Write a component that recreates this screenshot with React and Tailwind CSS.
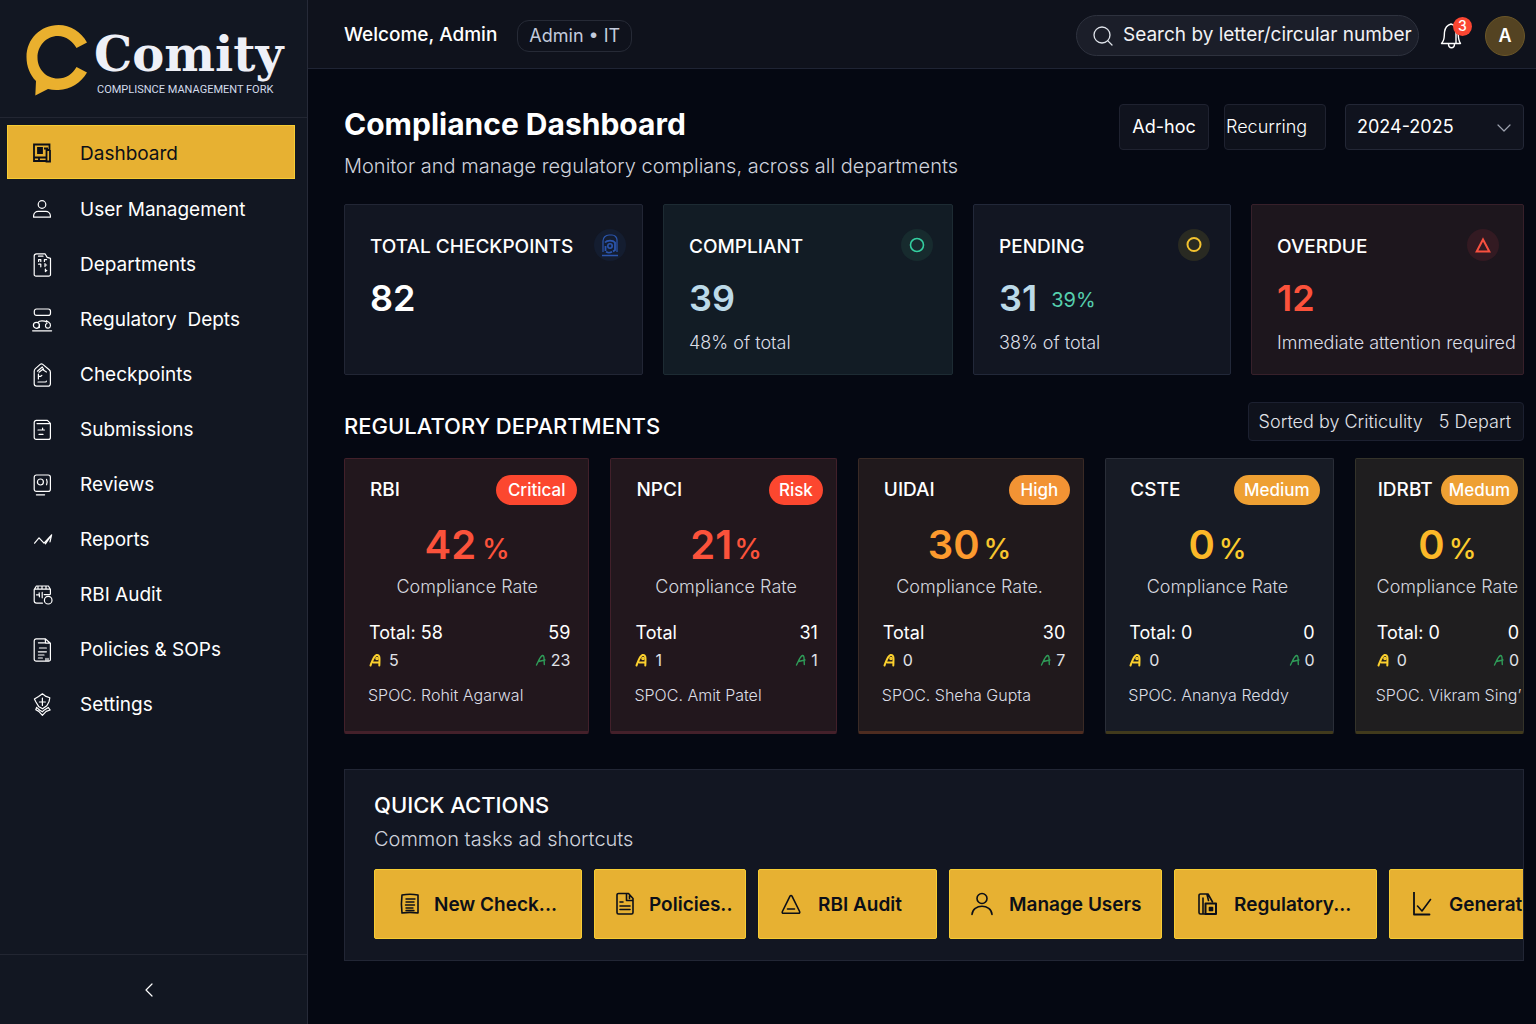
import {useState} from "react";
import {ChevronDown, ChevronLeft, Search} from "lucide-react";

const NavIcon = ({children}) => (
  <svg
    className="w-6 h-6 shrink-0"
    viewBox="0 0 24 24"
    fill="none"
    stroke="currentColor"
    strokeWidth="1.2"
    strokeLinecap="round"
    strokeLinejoin="round"
    aria-hidden="true"
  >
    {children}
  </svg>
);

const navItems = [
  {
    name: "User Management",
    icon: (
      <>
        <circle cx="12" cy="6.5" r="3.8" />
        <path d="M3.6 19.2v-1.4a4.6 4.6 0 0 1 4.6-4.4h7.6a4.6 4.6 0 0 1 4.6 4.4v1.4z" />
      </>
    ),
  },
  {
    name: "Departments",
    icon: (
      <>
        <path d="M6.5.8H15l2.2 3.6 3.3 1v16a1.8 1.8 0 0 1-1.8 1.8H6a1.8 1.8 0 0 1-1.8-1.8V3.1A2.3 2.3 0 0 1 6.5.8z" />
        <path d="M8.5 3.2h4.5M8.6 8.4V6.6h2.2v1.8M14.4 8.4V6.6h2.2M8.6 11.2h2.2v2.6M15 10.6v3M15 12h1.6M15.4 16v2.6l1.4-1.3" />
      </>
    ),
  },
  {
    name: "Regulatory  Depts",
    icon: (
      <>
        <rect x="4.3" y="1" width="16.2" height="6.4" rx="2.2" />
        <path d="M8 14.4c1-1.6 3.2-1.6 4-1.6s3 0 4.6 1.2M16.4 12.6l1.8 1.4" />
        <circle cx="6.4" cy="17.3" r="3" />
        <path d="M18.8 14.2c2.6 1.6 2 5.8-.6 6-3 .2-3.8-3.6-1.2-5M9.4 17v2.6M2.6 22.8h19" />
      </>
    ),
  },
  {
    name: "Checkpoints",
    icon: (
      <>
        <path d="M4.2 8.2c0-1.2.4-1.8 1.2-2.6l4.8-4.2c.8-.7 1.8-.7 2.6 0l6.4 5.4c.8.7 1.2 1.4 1.2 2.4v11.6a2.4 2.4 0 0 1-2.4 2.4H6.6a2.4 2.4 0 0 1-2.4-2.4z" />
        <path d="M7.4 8.2 12.2 4l1.4 2.2M9 9.2l3.6-2.6 3.8 2.4M8.4 11v5M8.4 13.4h2l1.4-1M8 19h7.4a1 1 0 0 0 1-1" />
      </>
    ),
  },
  {
    name: "Submissions",
    icon: (
      <>
        <path d="M6.4 2.4h11l3 3v14a2 2 0 0 1-2 2H6.2a2 2 0 0 1-2-2V4.6a2.2 2.2 0 0 1 2.2-2.2zM7 5.6h13" />
        <path d="M8 12h6.4M12.6 10v2M9 16.4h4" />
      </>
    ),
  },
  {
    name: "Reviews",
    icon: (
      <>
        <rect x="4.2" y="2" width="16.2" height="16.4" rx="2.2" />
        <circle cx="10.4" cy="9" r="3" />
        <path d="M16.6 6.4c.8 1.8.8 3.6 0 5.4M6.4 21.8h8.2" />
      </>
    ),
  },
  {
    name: "Reports",
    icon: (
      <path d="M4.6 15.2 9 9.8l5 5.4 7.6-8.4-1.6 7M17 13l-1.6 2.8 6.2-9" />
    ),
  },
  {
    name: "RBI Audit",
    icon: (
      <>
        <path d="M12.4 20.2H6.6a2.4 2.4 0 0 1-2.4-2.4V6.6L6.4 3h12l2 3.2v5M4.6 6.2h15.6M8 3.2v3M12 3.2v3M16 3.2v3M6.4 11.8h2.8v-2M12.2 9.4v5.4M14.2 11.6h5.4M9.4 11.8v2" />
        <circle cx="18.2" cy="17.2" r="3.8" />
      </>
    ),
  },
  {
    name: "Policies & SOPs",
    icon: (
      <>
        <path d="M6 .8h9.2l5.2 4.4v16.2a1.8 1.8 0 0 1-1.8 1.8H6.2a2 2 0 0 1-2-2V2.8A2 2 0 0 1 6 .8zM8.4 4.8h7M15.2 1l.4 4.2h4.6" />
        <path d="M9.4 10h7M8.4 13.8h8M8.4 17h5.6M8.4 20h4M16 20.4v2.2M18 20.4v2.2" />
      </>
    ),
  },
  {
    name: "Settings",
    icon: (
      <>
        <path d="M8.6 3.4 12.4.8l3.6 2.6 3.8 1.4-.8 4-2.2 4-4.2 3-4-2.4-2.8-4.6L4.4 6z" />
        <path d="M12.4 5v7.4M9.4 9h6M6.6 14.4l-.8 2.4 3 1.6 3.6 4 3.8-4 4-1.4-2-2.6-4.2 2.8-1.6 1.6-2.6-1.6-3.2-2.8" />
      </>
    ),
  },
];

const stats = [
  {
    title: "TOTAL CHECKPOINTS",
    value: "82",
    card: "bg-[#121622] border-[#222635]",
    head: "pr-4",
    valueColor: "text-white",
    badge: "bg-[#141d30] text-[#2b55ac]",
    icon: (
      <>
        <path d="M5 19V8a6 6 0 0 1 6-6h3a5 5 0 0 1 5 5v12" strokeWidth="1.2" />
        <path d="M7 9.5c2-2.5 8-2.5 10 0V17l-2 1.5M7.5 13v5" strokeWidth="1.8" />
        <circle cx="12" cy="13" r="2.2" />
        <path d="M4 22.5h16M8 18.8c2 1.2 4 1.2 6 0" strokeWidth="1.6" />
      </>
    ),
  },
  {
    title: "COMPLIANT",
    value: "39",
    note: "48% of total",
    card: "bg-[#121c25] border-[#1d2b33]",
    head: "pr-[19px]",
    valueColor: "text-[#bcdae8]",
    badge: "bg-[#172b2e] text-[#34cfa0]",
    icon: <circle cx="12" cy="12" r="6.5" />,
  },
  {
    title: "PENDING",
    value: "31",
    extra: "39%",
    note: "38% of total",
    card: "bg-[#121622] border-[#222839]",
    head: "pr-5",
    valueColor: "text-[#bcdae8]",
    badge: "bg-[#292a22] text-[#f3c32f]",
    icon: <circle cx="12" cy="11.5" r="6.5" strokeWidth="2" />,
  },
  {
    title: "OVERDUE",
    value: "12",
    note: "Immediate attention required",
    card: "bg-[#1d161d] border-[#37202a]",
    head: "pr-6",
    valueColor: "text-[#fb523b]",
    badge: "bg-[#331a22] text-[#f9503f]",
    icon: <path d="M12 6.5 18.3 18.5H5.7z" strokeWidth="2" />,
  },
];

const departments = [
  {
    name: "RBI",
    level: "Critical",
    badge: "bg-[#fc472f] px-3",
    rate: "42",
    rateColor: "text-[#fb523b]",
    percentColor: "text-[#fb523b] ml-1.5",
    label: "Compliance Rate",
    total: "Total: 58",
    count: "59",
    open: 5,
    done: 23,
    spoc: "SPOC. Rohit Agarwal",
    card: "bg-[#22171d] border-[#42202a] border-b-[#44202a] pl-[23px]",
    head: "pr-[11px]",
    center: "pr-[22px]",
    inset: "pr-[18px]",
  },
  {
    name: "NPCI",
    level: "Risk",
    badge: "bg-[#fc472f] px-2.5",
    rate: "21",
    rateColor: "text-[#fb523b]",
    percentColor: "text-[#fb523b] ml-0.5",
    label: "Compliance Rate",
    total: "Total",
    count: "31",
    open: 1,
    done: 1,
    spoc: "SPOC. Amit Patel",
    card: "bg-[#22171d] border-[#42202a] border-b-[#44202a] pl-[23px]",
    head: "pr-[13px]",
    center: "pr-[18px]",
    inset: "pr-[18px]",
  },
  {
    name: "UIDAI",
    level: "High",
    badge: "bg-[#f29334] px-3",
    rate: "30",
    rateColor: "text-[#fc9a2e]",
    percentColor: "text-[#f8c52e] ml-1",
    label: "Compliance Rate.",
    total: "Total",
    count: "30",
    open: 0,
    done: 7,
    spoc: "SPOC. Sheha Gupta",
    card: "bg-[#20191c] border-[#3a2a25] border-b-[#4e2c20] pl-[23px]",
    head: "pr-[13px]",
    center: "pr-[26px]",
    inset: "pr-[18px]",
  },
  {
    name: "CSTE",
    level: "Medium",
    badge: "bg-[#eea033] px-2.5",
    rate: "0",
    rateColor: "text-[#fbb828]",
    percentColor: "text-[#fbcb2d] ml-1",
    label: "Compliance Rate",
    total: "Total: 0",
    count: "0",
    open: 0,
    done: 0,
    spoc: "SPOC. Ananya Reddy",
    card: "bg-[#171b25] border-[#2a2e38] border-b-[#413a1c] pl-[22px]",
    head: "pr-[13px]",
    center: "pr-[26px]",
    inset: "pr-[18px]",
  },
  {
    name: "IDRBT",
    level: "Medum",
    badge: "bg-[#eea033] px-2",
    rate: "0",
    rateColor: "text-[#fbb828]",
    percentColor: "text-[#fbcb2d] ml-1",
    label: "Compliance Rate",
    total: "Total: 0",
    count: "0",
    open: 0,
    done: 0,
    spoc: "SPOC. Vikram Sing’",
    card: "bg-[#1f1e1f] border-[#34332a] border-b-[#413a1c] pl-5",
    head: "pr-[5px]",
    center: "pr-1",
    inset: "pr-1",
  },
];

const actions = [
  {
    name: "New Check...",
    size: "w-[208px] pl-[23px] gap-3",
    icon: (
      <>
        <path d="M4 3c5-1 11-1 16 0v18c-5-.8-11-.8-16 0-.8-6-.8-12 0-18z" />
        <path d="M8 7h9M8 10h8M7.5 13h9M8 16h7M8 18.5h8" strokeWidth="1.4" />
      </>
    ),
  },
  {
    name: "Policies..",
    size: "w-[152px] pl-[18px] gap-3",
    icon: (
      <>
        <path d="M5.5 1.5h10l4.5 5v14a1.5 1.5 0 0 1-1.5 1.5h-13A1.5 1.5 0 0 1 4 20.5V3a1.5 1.5 0 0 1 1.5-1.5zM13.5 1.5v7H20M16.5 3.5v3" />
        <path d="M7 10h3M7 14h10M7 17.5h10" />
      </>
    ),
  },
  {
    name: "RBI Audit",
    size: "w-[179px] pl-5 gap-[15px]",
    icon: (
      <>
        <path d="M11 4.2c.5-.9 1.5-.9 2 0l7.6 15.3c.5 1-.1 1.8-1 1.8H4.400c-1 0-1.500-.8-1-1.800z" />
        <path d="M8.5 17h7" />
      </>
    ),
  },
  {
    name: "Manage Users",
    size: "w-[213px] pl-5 gap-[15px]",
    icon: (
      <>
        <circle cx="12" cy="6.5" r="5" />
        <path d="M2 22.5c.5-11 19.5-11 20 0" />
      </>
    ),
  },
  {
    name: "Regulatory...",
    size: "w-[203px] pl-5 gap-[15px]",
    icon: (
      <>
        <path d="M11 22H5.5A1.5 1.5 0 0 1 4 20.5v-17A1.5 1.5 0 0 1 5.5 2H13l4.5 8M8 6v16M12 2.5l1.5 6" />
        <path d="M10.5 11.5H21V22H10.5z" strokeWidth="2" />
        <path d="M14.5 15.5h3v3h-3z" fill="currentColor" />
      </>
    ),
  },
  {
    name: "Generat",
    size: "w-[203px] pl-5 gap-[15px]",
    icon: (
      <>
        <path d="M4 0v22.5h15.5" strokeWidth="1.8" />
        <path d="m7.5 14 4.5 5L20.5 7.5" />
      </>
    ),
  },
];

const AlertMark = () => (
  <svg
    className="w-3 h-3.5 text-[#fbd02e]"
    viewBox="0 0 12 14"
    fill="none"
    stroke="currentColor"
    strokeWidth="2"
    strokeLinecap="round"
    aria-hidden="true"
  >
    <path d="M1.5 12.5C3 9 4.5 3 7.5 2c4-.8 3 5 2.8 10.5M4.5 9.5h5.5" />
    <circle cx="8" cy="5.5" r=".8" />
  </svg>
);

const DoneMark = () => (
  <svg
    className="w-3 h-3.5 text-[#2f9c58]"
    viewBox="0 0 12 14"
    fill="none"
    stroke="currentColor"
    strokeWidth="1.4"
    strokeLinecap="round"
    aria-hidden="true"
  >
    <path d="M1.5 12C3 9 5 3.5 7.5 2.5c2-.4 1.5 4 1.8 9M3.5 8.5l6.5-1.5" />
  </svg>
);

const Logo = () => (
  <div className="flex h-[118px] border-b border-[#222632] pt-6 pl-[26px]">
    <svg className="w-[62px] h-[72px] shrink-0" viewBox="0 0 62 72" aria-hidden="true">
      <path
        fill="#eab02e"
        d="M61 18.5C55 7.5 44.500 1 32.500 1 14.500 1 .5 15 .5 33c0 9.500 3.500 18 9.500 24L9.300 71.500 22 65c3.500 1 7 1.200 10.500 1C44.500 65.500 55 59 61 48.500L50.500 43C46.500 50 40 54.500 32 54.500 20 54.500 11.500 45 11.500 33.500S20 12 32 12c8 0 14.500 5 18.500 12z"
      />
    </svg>
    <div className="ml-1.5 whitespace-nowrap font-['DejaVu_Serif',serif] text-[48px] leading-[60px] font-bold text-[#eef0f7]">
      Comity
      <div className="ml-[3px] font-['Roboto',sans-serif] text-[11px] leading-3 font-normal text-[#d3dcec]">
        COMPLISNCE MANAGEMENT FORK
      </div>
    </div>
  </div>
);

const Sidebar = () => (
  <aside className="flex w-[308px] shrink-0 flex-col border-r border-[#262a38] bg-[#121722]">
    <Logo />
    <nav className="flex flex-1 flex-col px-[7px] pt-[7px] text-[19px] text-white">
      <a
        href="#dashboard"
        className="mr-[5px] mb-[3px] flex h-[54px] items-center gap-[26px] border border-[#f6cc33] bg-[#e7b132] pt-0.5 pl-[22px] text-[#0c0f18]"
      >
        <svg className="w-6 h-6" viewBox="0 0 24 24" fill="none" stroke="currentColor" strokeWidth="1.8" aria-hidden="true">
          <path d="M16.5 20H4V3.5h15.5V9M20 9v11.5h-3.5V9H20M4 16.5h12.5" />
          <path d="M8 7h4v5H8z" fill="currentColor" />
          <path d="M14 7.5h4M9 16v4" />
        </svg>
        <span className="pt-0.5">Dashboard</span>
      </a>
      {navItems.map((item) => (
        <a
          key={item.name}
          href={`#${item.name.split(" ")[0].toLowerCase()}`}
          className="flex h-[55px] items-center gap-[26px] pl-[23px] whitespace-pre hover:bg-white/5"
        >
          <NavIcon>{item.icon}</NavIcon>
          <span className="pt-0.5">{item.name}</span>
        </a>
      ))}
    </nav>
    <div className="flex h-[70px] items-center border-t border-[#222632] pl-[137px]">
      <button aria-label="Collapse sidebar">
        <ChevronLeft className="w-6 h-6 text-white" strokeWidth={1.2} />
      </button>
    </div>
  </aside>
);

const TopBar = () => (
  <header className="flex h-[69px] items-center border-b border-[#1f2434] bg-[#0f121c] pt-[3px] pr-[11px] pl-9 whitespace-nowrap">
    <p className="text-[19px] font-medium text-white">Welcome, Admin</p>
    <span className="ml-5 rounded-xl border border-[#262a36] px-[11px] text-lg leading-[30px] text-[#c3cbdc]">
      Admin • IT
    </span>
    <label className="ml-auto flex h-[41px] w-[343px] items-center gap-2 rounded-full border border-[#2e323e] bg-[#1b1e29] pr-1.5 pl-3.5">
      <Search className="w-6 h-6 shrink-0 text-[#dfe3ea]" strokeWidth={1.3} />
      <input
        type="text"
        aria-label="Search"
        placeholder="Search by letter/circular number"
        className="min-w-0 flex-1 bg-transparent text-[19px] text-white outline-none placeholder:text-[#f1f2f5]"
      />
    </label>
    <button className="relative ml-5" aria-label="Notifications">
      <svg className="w-6 h-[30px] text-white" viewBox="0 0 24 30" fill="none" stroke="currentColor" strokeWidth="1.4" strokeLinejoin="round" aria-hidden="true">
        <path d="M2.5 22.5C6 19 5 16 5.5 11c.5-4 3-7 6.5-8 4 1 6.5 4 7 8s0 8 2.5 11.5zM17 8v14.5M9.5 23c0 5 6 5 6 0" />
      </svg>
      <span className="absolute -top-1 left-3.5 flex h-[19px] w-[19px] items-center justify-center rounded-full bg-[#fb4632] text-sm font-medium text-white">
        3
      </span>
    </button>
    <button className="ml-[22px] h-10 w-10 rounded-full border border-[#6b5728] bg-[#544322] text-lg font-semibold text-white">
      A
    </button>
  </header>
);

const StatCard = ({stat}) => (
  <article className={`rounded-xs border pt-6 pb-[19px] pl-[25px] whitespace-nowrap ${stat.card}`}>
    <div className={`flex items-center justify-between ${stat.head}`}>
      <h3 className="pt-[3px] text-[19px] leading-6 font-medium">{stat.title}</h3>
      <span className={`flex h-8 w-8 items-center justify-center rounded-full ${stat.badge}`}>
        <svg className="w-6 h-6" viewBox="0 0 24 24" fill="none" stroke="currentColor" strokeWidth="1.6" aria-hidden="true">
          {stat.icon}
        </svg>
      </span>
    </div>
    <p className={`mt-[17px] flex items-center gap-3.5 text-4xl leading-10 font-semibold ${stat.valueColor}`}>
      {stat.value}
      {stat.extra && (
        <span className="pt-1 text-xl leading-6 font-normal text-[#56cfae]">{stat.extra}</span>
      )}
    </p>
    {stat.note && (
      <p className="mt-[13px] text-lg leading-6 font-light text-[#dcdee6]">{stat.note}</p>
    )}
  </article>
);

const DepartmentCard = ({dept}) => (
  <article
    className={`min-w-0 overflow-hidden rounded-xs border border-b-3 pt-4 pb-6 whitespace-nowrap ${dept.card}`}
  >
    <div className={`flex items-center justify-between pl-0.5 ${dept.head}`}>
      <h3 className="text-[19px] font-medium">{dept.name}</h3>
      <span className={`rounded-full text-[17px] leading-[30px] font-medium ${dept.badge}`}>
        {dept.level}
      </span>
    </div>
    <p className={`mt-[18px] flex h-11 items-baseline justify-center ${dept.center}`}>
      <span className={`text-[40px] leading-11 font-semibold ${dept.rateColor}`}>{dept.rate}</span>
      <span className={`text-[28px] leading-6 font-medium ${dept.percentColor}`}>%</span>
    </p>
    <p className={`mt-2 flex justify-center text-lg leading-6 font-light text-[#d5d7df] ${dept.center}`}>
      {dept.label}
    </p>
    <div className={`mt-[22px] flex justify-between pl-px text-lg leading-6 ${dept.inset}`}>
      <span>{dept.total}</span>
      <span>{dept.count}</span>
    </div>
    <div className={`mt-[5px] flex justify-between pl-px text-base leading-5 text-[#e0e2e8] ${dept.inset}`}>
      <span className="flex items-center gap-2">
        <AlertMark />
        {dept.open}
      </span>
      <span className="flex items-center gap-1">
        <DoneMark />
        {dept.done}
      </span>
    </div>
    <p className="mt-[13px] text-base leading-6 font-light text-[#dcdee6]">{dept.spoc}</p>
  </article>
);

const App = () => {
  const [type, setType] = useState("Ad-hoc");

  return (
    <div className="flex min-h-screen bg-[#050812] font-['Inter',sans-serif] text-white">
      <Sidebar />
      <div className="min-w-0 flex-1">
        <TopBar />
        <main className="pt-[35px] pr-3 pb-8 pl-9">
          <div className="flex items-start justify-between whitespace-nowrap">
            <div>
              <h1 className="text-3xl leading-10 font-bold">Compliance Dashboard</h1>
              <p className="mt-[10px] text-xl leading-6 font-light text-[#cfd2dc]">
                Monitor and manage regulatory complians, across all departments
              </p>
            </div>
            <div className="flex h-[46px] text-lg">
              <button
                onClick={() => setType("Ad-hoc")}
                aria-pressed={type === "Ad-hoc"}
                className="w-[90px] rounded-sm border border-[#1f2230] bg-[#10131e]"
              >
                Ad-hoc
              </button>
              <button
                onClick={() => setType("Recurring")}
                aria-pressed={type === "Recurring"}
                className="ml-[15px] w-[102px] rounded-sm border border-[#1f2230] bg-[#0e111b] pl-px text-left font-light"
              >
                Recurring
              </button>
              <div className="relative ml-[19px] w-[179px]">
                <select
                  aria-label="Financial year"
                  className="h-full w-full appearance-none rounded-sm border border-[#232736] bg-[#10131e] pl-[11px] text-white"
                >
                  <option>2024-2025</option>
                  <option>2023-2024</option>
                </select>
                <ChevronDown
                  className="pointer-events-none absolute top-3 right-2 w-6 h-6 text-[#9da2ae]"
                  strokeWidth={1.2}
                />
              </div>
            </div>
          </div>

          <section className="mt-[26px] grid grid-cols-[299fr_290fr_258fr_273fr] gap-5">
            {stats.map((stat) => (
              <StatCard key={stat.title} stat={stat} />
            ))}
          </section>

          <section className="mt-[27px]">
            <div className="flex items-start justify-between">
              <h2 className="pt-3 text-[22px] leading-6 font-medium">REGULATORY DEPARTMENTS</h2>
              <p className="flex gap-4 rounded-sm border border-[#1c2030] bg-[#0f121c] pt-px pr-3 pl-2.5 text-lg leading-9 font-light text-[#e0e2e8]">
                <span>Sorted by Criticulity</span>
                <span>5 Depart</span>
              </p>
            </div>
            <div className="mt-[17px] grid grid-cols-[245fr_226fr_226fr_228fr_169fr] gap-[21px]">
              {departments.map((dept) => (
                <DepartmentCard key={dept.name} dept={dept} />
              ))}
            </div>
          </section>

          <section className="mt-[35px] overflow-hidden border border-[#222635] bg-[#121622] pt-[23px] pb-[21px] pl-[29px]">
            <h2 className="text-[22px] leading-6 font-medium">QUICK ACTIONS</h2>
            <p className="mt-[10px] text-xl leading-6 font-light text-[#cfd2dc]">
              Common tasks ad shortcuts
            </p>
            <div className="mt-[18px] flex gap-3">
              {actions.map((action) => (
                <button
                  key={action.name}
                  className={`flex h-[70px] shrink-0 items-center rounded-xs border border-[#f6cc33] bg-[#e7b132] text-[19px] font-semibold text-[#0c0f18] ${action.size}`}
                >
                  <svg
                    className="w-6 h-6 shrink-0"
                    viewBox="0 0 24 24"
                    fill="none"
                    stroke="currentColor"
                    strokeWidth="1.6"
                    strokeLinecap="round"
                    strokeLinejoin="round"
                    aria-hidden="true"
                  >
                    {action.icon}
                  </svg>
                  <span className="pt-0.5">{action.name}</span>
                </button>
              ))}
            </div>
          </section>
        </main>
      </div>
    </div>
  );
};

export default App;
